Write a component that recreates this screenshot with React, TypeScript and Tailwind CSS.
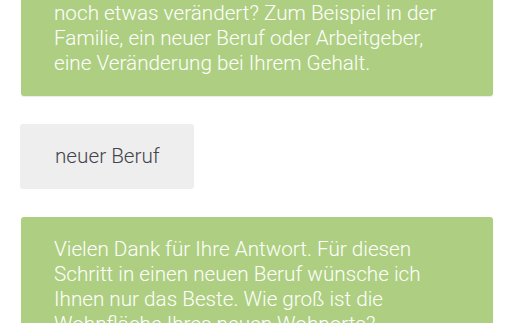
const font = { fontFamily: 'Roboto, "Liberation Sans", sans-serif' };

function BotBubble({ children }: { children: React.ReactNode }) {
  return (
    <div className="rounded-[3px] bg-[#aecf81] py-5 pl-[33px] pr-[40px] text-[20.7px] font-light leading-[25px] text-white shadow-[0_1px_1px_rgba(0,0,0,0.08)]">
      {children}
    </div>
  );
}

function UserBubble({ children }: { children: React.ReactNode }) {
  return (
    <div className="self-start rounded-[3px] bg-[#eeeeee] py-5 pl-[35px] pr-[34px] text-[20.7px] font-light leading-[25px] text-[#44444c]">
      {children}
    </div>
  );
}

export default function App() {
  return (
    <div className="h-[323px] w-[516px] overflow-hidden bg-white" style={font}>
      <div className="mt-[-19px] flex flex-col gap-[28px] pl-[21px] pr-[23px]">
        <BotBubble>
          noch etwas verändert? Zum Beispiel in der Familie, ein neuer Beruf oder Arbeitgeber, eine Veränderung bei
          Ihrem Gehalt.
        </BotBubble>
        <div className="-ml-px flex">
          <UserBubble>neuer Beruf</UserBubble>
        </div>
        <BotBubble>
          Vielen Dank für Ihre Antwort. Für diesen Schritt in einen neuen Beruf wünsche ich Ihnen nur das Beste. Wie
          groß ist die Wohnfläche Ihres neuen Wohnorts?
        </BotBubble>
      </div>
    </div>
  );
}
